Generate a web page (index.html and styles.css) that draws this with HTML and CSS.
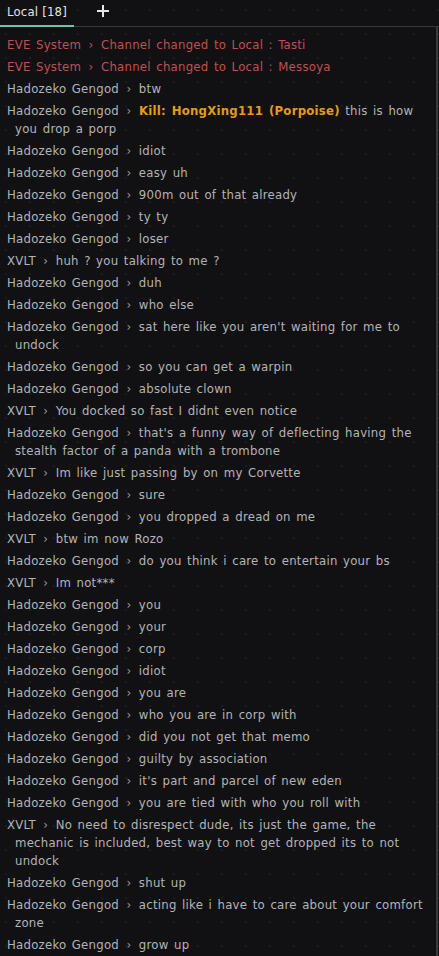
FILE: index.html
```html
<!DOCTYPE html>
<html lang="en">
<head>
  <meta charset="UTF-8">
  <meta name="viewport" content="width=device-width, initial-scale=1.0">
  <title>Local chat</title>
  <link rel="stylesheet" href="styles.css">
</head>
<body>
  <div class="window">
    <div class="tabs">
      <div class="tab active">Local [18]</div>
      <div class="tab-add">
        <svg width="12" height="12" viewBox="0 0 12 12"><path d="M6 0V12M0 6H12" stroke="#e6e6e6" stroke-width="2"/></svg>
      </div>
    </div>
    <div class="log">
      <p class="msg sys">EVE System <span class="sep">›</span> Channel changed to Local : Tasti</p>
      <p class="msg sys">EVE System <span class="sep">›</span> Channel changed to Local : Messoya</p>
      <p class="msg">Hadozeko Gengod <span class="sep">›</span> btw</p>
      <p class="msg">Hadozeko Gengod <span class="sep">›</span> <span class="kill">Kill: HongXing111 (Porpoise)</span> this is how you drop a porp</p>
      <p class="msg">Hadozeko Gengod <span class="sep">›</span> idiot</p>
      <p class="msg">Hadozeko Gengod <span class="sep">›</span> easy uh</p>
      <p class="msg">Hadozeko Gengod <span class="sep">›</span> 900m out of that already</p>
      <p class="msg">Hadozeko Gengod <span class="sep">›</span> ty ty</p>
      <p class="msg">Hadozeko Gengod <span class="sep">›</span> loser</p>
      <p class="msg">XVLT <span class="sep">›</span> huh ? you talking to me ?</p>
      <p class="msg">Hadozeko Gengod <span class="sep">›</span> duh</p>
      <p class="msg">Hadozeko Gengod <span class="sep">›</span> who else</p>
      <p class="msg">Hadozeko Gengod <span class="sep">›</span> sat here like you aren't waiting for me to undock</p>
      <p class="msg">Hadozeko Gengod <span class="sep">›</span> so you can get a warpin</p>
      <p class="msg">Hadozeko Gengod <span class="sep">›</span> absolute clown</p>
      <p class="msg">XVLT <span class="sep">›</span> You docked so fast I didnt even notice</p>
      <p class="msg">Hadozeko Gengod <span class="sep">›</span> that's a funny way of deflecting having the stealth factor of a panda with a trombone</p>
      <p class="msg">XVLT <span class="sep">›</span> Im like just passing by on my Corvette</p>
      <p class="msg">Hadozeko Gengod <span class="sep">›</span> sure</p>
      <p class="msg">Hadozeko Gengod <span class="sep">›</span> you dropped a dread on me</p>
      <p class="msg">XVLT <span class="sep">›</span> btw im now Rozo</p>
      <p class="msg">Hadozeko Gengod <span class="sep">›</span> do you think i care to entertain your bs</p>
      <p class="msg">XVLT <span class="sep">›</span> Im not***</p>
      <p class="msg">Hadozeko Gengod <span class="sep">›</span> you</p>
      <p class="msg">Hadozeko Gengod <span class="sep">›</span> your</p>
      <p class="msg">Hadozeko Gengod <span class="sep">›</span> corp</p>
      <p class="msg">Hadozeko Gengod <span class="sep">›</span> idiot</p>
      <p class="msg">Hadozeko Gengod <span class="sep">›</span> you are</p>
      <p class="msg">Hadozeko Gengod <span class="sep">›</span> who you are in corp with</p>
      <p class="msg">Hadozeko Gengod <span class="sep">›</span> did you not get that memo</p>
      <p class="msg">Hadozeko Gengod <span class="sep">›</span> guilty by association</p>
      <p class="msg">Hadozeko Gengod <span class="sep">›</span> it's part and parcel of new eden</p>
      <p class="msg">Hadozeko Gengod <span class="sep">›</span> you are tied with who you roll with</p>
      <p class="msg">XVLT <span class="sep">›</span> No need to disrespect dude, its just the game, the mechanic is included, best way to not get dropped its to not undock</p>
      <p class="msg">Hadozeko Gengod <span class="sep">›</span> shut up</p>
      <p class="msg">Hadozeko Gengod <span class="sep">›</span> acting like i have to care about your comfort zone</p>
      <p class="msg">Hadozeko Gengod <span class="sep">›</span> grow up</p>
    </div>
  </div>
</body>
</html>
```

FILE: styles.css
```css
html, body {
  margin: 0;
  padding: 0;
  height: 100%;
  background-color: #111114;
}
body {
  font-family: "DejaVu Sans Condensed", "DejaVu Sans", sans-serif;
  font-size: 13px;
  color: #b4b4b4;
  overflow: hidden;
}
.window {
  height: 956px;
  background-color: #111114;
  background-image: radial-gradient(circle, #1c1c20 1px, transparent 1.5px);
  background-size: 24px 24px;
  background-position: -6px -2px;
}
.tabs {
  display: flex;
  align-items: flex-end;
  height: 26px;
  border-bottom: 1px solid #38383b;
}
.tab {
  padding: 0 7px 4px 7px;
  color: #e4e4e4;
  line-height: 18px;
  letter-spacing: 0.2px;
  border-bottom: 2px solid #6ec4a9;
  margin-bottom: -1px;
}
.tab-add {
  display: flex;
  align-items: center;
  margin-left: 23px;
  height: 26px;
  padding-bottom: 4px;
  box-sizing: border-box;
}
.log {
  border-right: 2px solid #3a3a3e;
  height: 929px;
  margin-right: 1px;
  padding-top: 9px;
  box-sizing: border-box;
}
.msg {
  margin: 0 0 4px 0;
  line-height: 18px;
  padding: 0 8px 0 15px;
  text-indent: -8px;
  letter-spacing: 0.25px;
  word-spacing: 1.5px;
}
.sep {
  color: #9a9a9a;
  margin: 0 2px;
}
.sys {
  color: #c0504e;
}
.sys .sep {
  color: inherit;
}
.kill {
  color: #e39b19;
  font-weight: bold;
}
```
